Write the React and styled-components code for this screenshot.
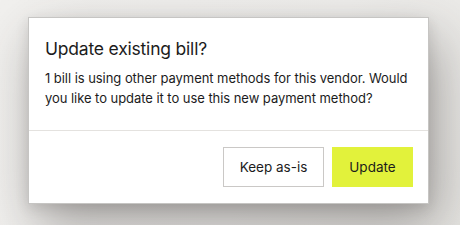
import styled, { createGlobalStyle } from "styled-components";

const GlobalStyle = createGlobalStyle`
  html, body {
    margin: 0;
    padding: 0;
  }
  body {
    width: 460px;
    height: 225px;
    overflow: hidden;
    background: linear-gradient(120deg, #f1f0ee 0%, #efeeec 60%, #e6e5e2 100%);
    font-family: Inter, "Noto Sans", sans-serif;
    color: #1c1c1c;
  }
`;

function App() {
  return (
    <>
      <GlobalStyle />
      <Page>
        <Dialog>
          <Header>
            <Title>Update existing bill?</Title>
            <Body>
              1 bill is using other payment methods for this vendor. Would you
              like to update it to use this new payment method?
            </Body>
          </Header>
          <Footer>
            <Button $width="101px">Keep as-is</Button>
            <Button $primary $width="81px">
              Update
            </Button>
          </Footer>
        </Dialog>
      </Page>
    </>
  );
}

const Page = styled.div`
  padding: 17px 0 0 28px;
`;

const Dialog = styled.div`
  width: 401px;
  box-sizing: border-box;
  background: #fff;
  border: 1px solid #c6c5c3;
  box-shadow: 8px 22px 50px rgba(50, 46, 42, 0.4), 0 4px 12px rgba(50, 46, 42, 0.14);
`;

const Header = styled.div`
  padding: 19px 16px 22px;
  border-bottom: 1px solid #e4e2df;
`;

const Title = styled.h2`
  margin: 0 0 7px;
  font-size: 17.5px;
  line-height: 24px;
  font-weight: 400;
  letter-spacing: -0.2px;
`;

const Body = styled.p`
  margin: 0;
  font-size: 13px;
  line-height: 20px;
  letter-spacing: -0.05px;
`;

const Footer = styled.div`
  display: flex;
  justify-content: flex-end;
  gap: 8px;
  padding: 16px 15px;
`;

const Button = styled.button`
  width: ${(p) => p.$width};
  height: 40px;
  padding: 0;
  font-family: Inter, "Noto Sans", sans-serif;
  font-size: 13.5px;
  color: #1c1c1c;
  border: 1px solid ${(p) => (p.$primary ? "#e2f23b" : "#cac8c6")};
  background: ${(p) => (p.$primary ? "#e2f23b" : "#fff")};
  cursor: pointer;
`;

export default App;
